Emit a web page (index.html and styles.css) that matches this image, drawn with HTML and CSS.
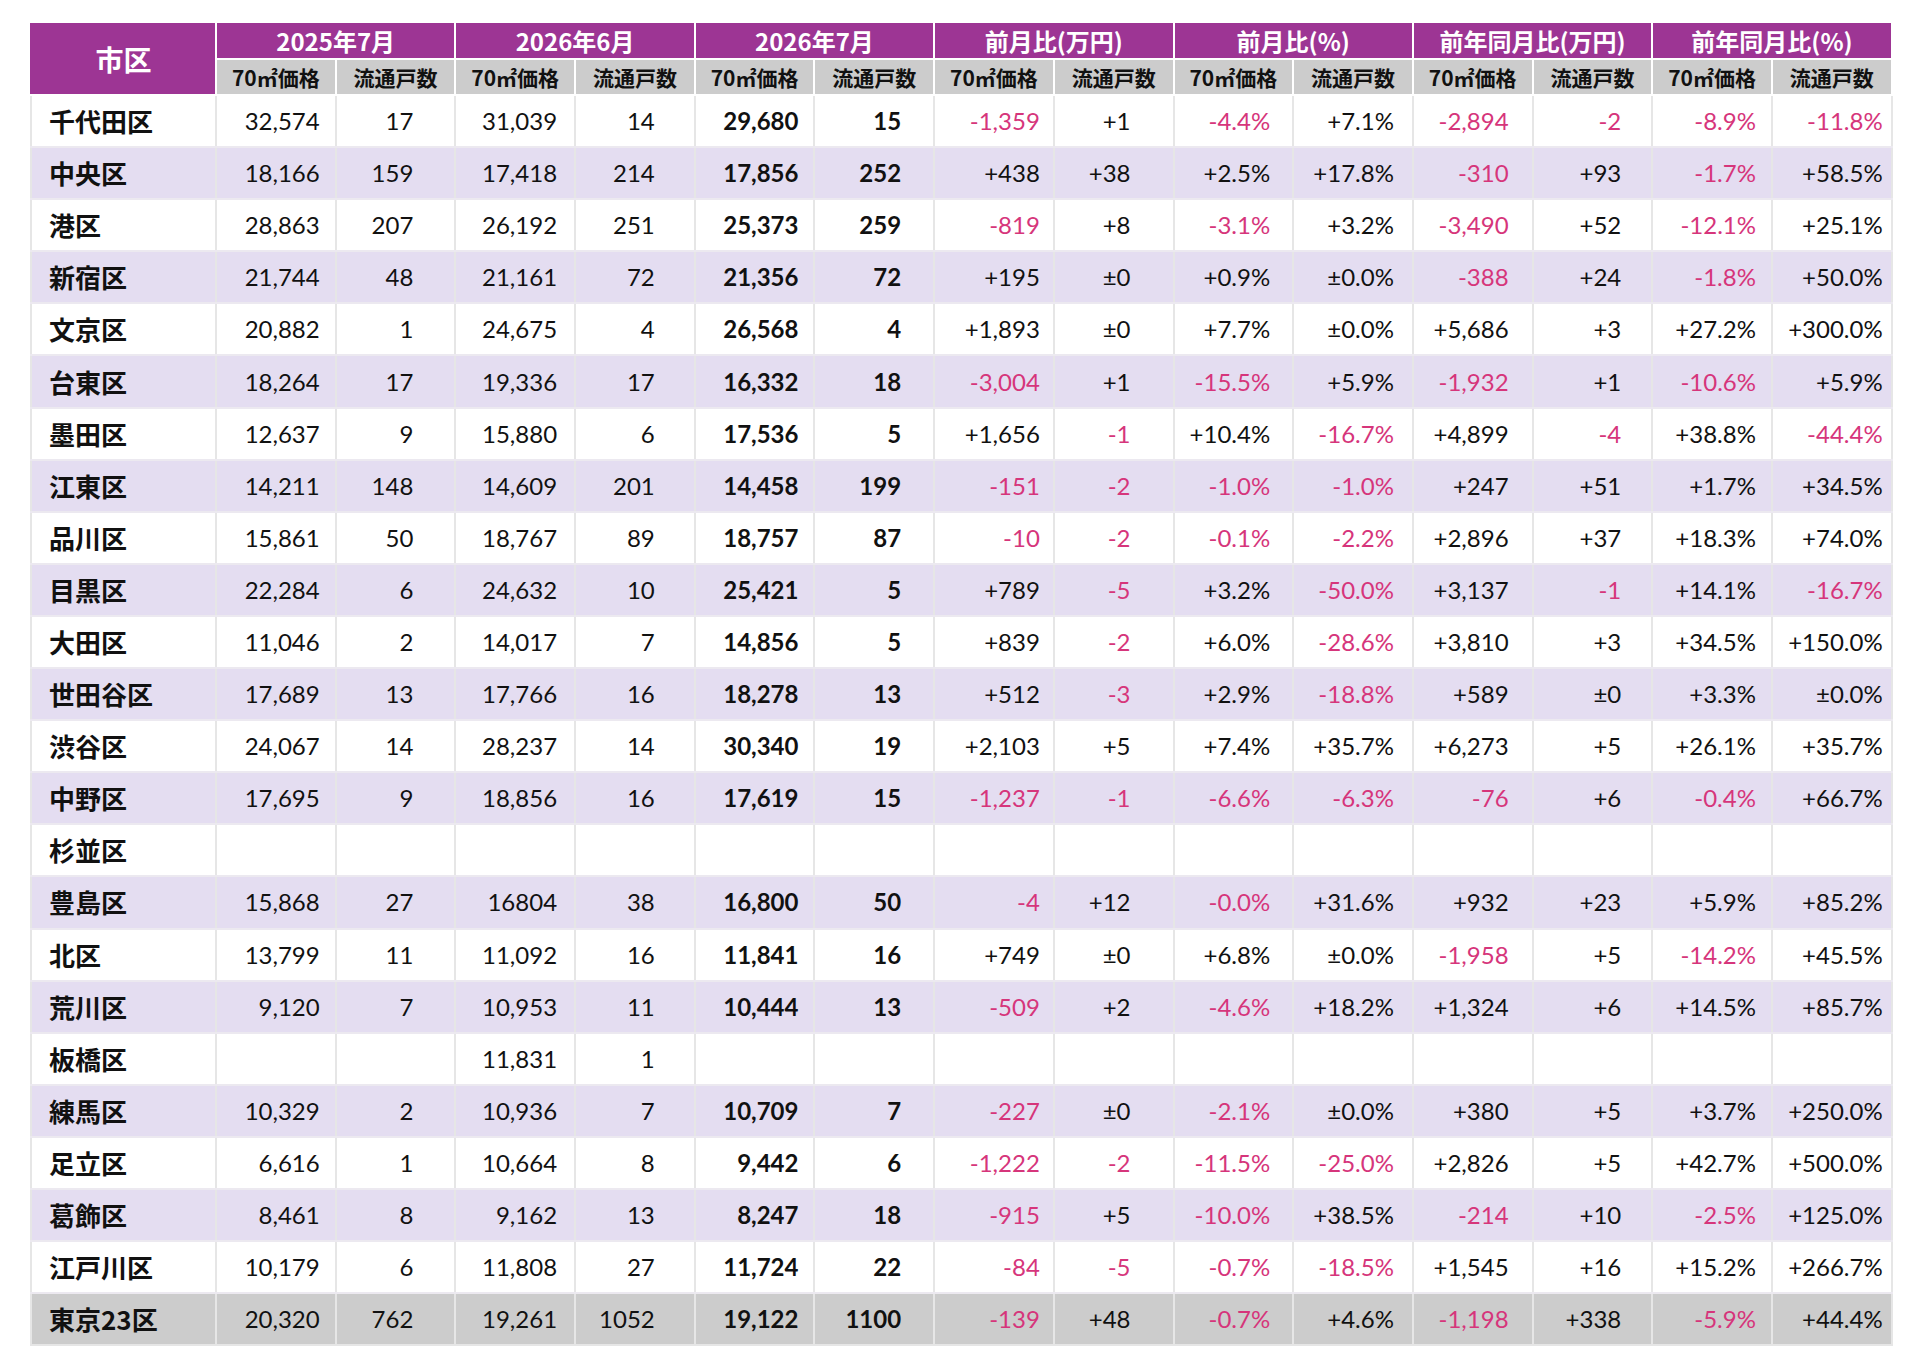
FILE: index.html
```html
<!DOCTYPE html>
<html lang="ja">
<head>
<meta charset="utf-8">
<title>東京23区 70㎡価格・流通戸数</title>
<link rel="stylesheet" href="styles.css">
</head>
<body>
<table class="grid">
<colgroup>
<col class="c-ward">
<col class="c-num"><col class="c-num"><col class="c-num"><col class="c-num"><col class="c-num"><col class="c-num"><col class="c-num">
<col class="c-num"><col class="c-num"><col class="c-num"><col class="c-num"><col class="c-num"><col class="c-num"><col class="c-num">
</colgroup>
<thead>
<tr class="h1">
<th rowspan="2" class="ward-h">市区</th>
<th colspan="2">2025年7月</th>
<th colspan="2">2026年6月</th>
<th colspan="2">2026年7月</th>
<th colspan="2">前月比(万円)</th>
<th colspan="2">前月比(%)</th>
<th colspan="2">前年同月比(万円)</th>
<th colspan="2">前年同月比(%)</th>
</tr>
<tr class="h2">
<th>70㎡価格</th><th>流通戸数</th>
<th>70㎡価格</th><th>流通戸数</th>
<th>70㎡価格</th><th>流通戸数</th>
<th>70㎡価格</th><th>流通戸数</th>
<th>70㎡価格</th><th>流通戸数</th>
<th>70㎡価格</th><th>流通戸数</th>
<th>70㎡価格</th><th>流通戸数</th>
</tr>
</thead>
<tbody>
<tr><td>千代田区</td><td>32,574</td><td>17</td><td>31,039</td><td>14</td><td>29,680</td><td>15</td><td class="neg">-1,359</td><td>+1</td><td class="neg">-4.4%</td><td>+7.1%</td><td class="neg">-2,894</td><td class="neg">-2</td><td class="neg">-8.9%</td><td class="neg">-11.8%</td></tr>
<tr class="alt"><td>中央区</td><td>18,166</td><td>159</td><td>17,418</td><td>214</td><td>17,856</td><td>252</td><td>+438</td><td>+38</td><td>+2.5%</td><td>+17.8%</td><td class="neg">-310</td><td>+93</td><td class="neg">-1.7%</td><td>+58.5%</td></tr>
<tr><td>港区</td><td>28,863</td><td>207</td><td>26,192</td><td>251</td><td>25,373</td><td>259</td><td class="neg">-819</td><td>+8</td><td class="neg">-3.1%</td><td>+3.2%</td><td class="neg">-3,490</td><td>+52</td><td class="neg">-12.1%</td><td>+25.1%</td></tr>
<tr class="alt"><td>新宿区</td><td>21,744</td><td>48</td><td>21,161</td><td>72</td><td>21,356</td><td>72</td><td>+195</td><td>±0</td><td>+0.9%</td><td>±0.0%</td><td class="neg">-388</td><td>+24</td><td class="neg">-1.8%</td><td>+50.0%</td></tr>
<tr><td>文京区</td><td>20,882</td><td>1</td><td>24,675</td><td>4</td><td>26,568</td><td>4</td><td>+1,893</td><td>±0</td><td>+7.7%</td><td>±0.0%</td><td>+5,686</td><td>+3</td><td>+27.2%</td><td>+300.0%</td></tr>
<tr class="alt"><td>台東区</td><td>18,264</td><td>17</td><td>19,336</td><td>17</td><td>16,332</td><td>18</td><td class="neg">-3,004</td><td>+1</td><td class="neg">-15.5%</td><td>+5.9%</td><td class="neg">-1,932</td><td>+1</td><td class="neg">-10.6%</td><td>+5.9%</td></tr>
<tr><td>墨田区</td><td>12,637</td><td>9</td><td>15,880</td><td>6</td><td>17,536</td><td>5</td><td>+1,656</td><td class="neg">-1</td><td>+10.4%</td><td class="neg">-16.7%</td><td>+4,899</td><td class="neg">-4</td><td>+38.8%</td><td class="neg">-44.4%</td></tr>
<tr class="alt"><td>江東区</td><td>14,211</td><td>148</td><td>14,609</td><td>201</td><td>14,458</td><td>199</td><td class="neg">-151</td><td class="neg">-2</td><td class="neg">-1.0%</td><td class="neg">-1.0%</td><td>+247</td><td>+51</td><td>+1.7%</td><td>+34.5%</td></tr>
<tr><td>品川区</td><td>15,861</td><td>50</td><td>18,767</td><td>89</td><td>18,757</td><td>87</td><td class="neg">-10</td><td class="neg">-2</td><td class="neg">-0.1%</td><td class="neg">-2.2%</td><td>+2,896</td><td>+37</td><td>+18.3%</td><td>+74.0%</td></tr>
<tr class="alt"><td>目黒区</td><td>22,284</td><td>6</td><td>24,632</td><td>10</td><td>25,421</td><td>5</td><td>+789</td><td class="neg">-5</td><td>+3.2%</td><td class="neg">-50.0%</td><td>+3,137</td><td class="neg">-1</td><td>+14.1%</td><td class="neg">-16.7%</td></tr>
<tr><td>大田区</td><td>11,046</td><td>2</td><td>14,017</td><td>7</td><td>14,856</td><td>5</td><td>+839</td><td class="neg">-2</td><td>+6.0%</td><td class="neg">-28.6%</td><td>+3,810</td><td>+3</td><td>+34.5%</td><td>+150.0%</td></tr>
<tr class="alt"><td>世田谷区</td><td>17,689</td><td>13</td><td>17,766</td><td>16</td><td>18,278</td><td>13</td><td>+512</td><td class="neg">-3</td><td>+2.9%</td><td class="neg">-18.8%</td><td>+589</td><td>±0</td><td>+3.3%</td><td>±0.0%</td></tr>
<tr><td>渋谷区</td><td>24,067</td><td>14</td><td>28,237</td><td>14</td><td>30,340</td><td>19</td><td>+2,103</td><td>+5</td><td>+7.4%</td><td>+35.7%</td><td>+6,273</td><td>+5</td><td>+26.1%</td><td>+35.7%</td></tr>
<tr class="alt"><td>中野区</td><td>17,695</td><td>9</td><td>18,856</td><td>16</td><td>17,619</td><td>15</td><td class="neg">-1,237</td><td class="neg">-1</td><td class="neg">-6.6%</td><td class="neg">-6.3%</td><td class="neg">-76</td><td>+6</td><td class="neg">-0.4%</td><td>+66.7%</td></tr>
<tr><td>杉並区</td><td></td><td></td><td></td><td></td><td></td><td></td><td></td><td></td><td></td><td></td><td></td><td></td><td></td><td></td></tr>
<tr class="alt"><td>豊島区</td><td>15,868</td><td>27</td><td>16804</td><td>38</td><td>16,800</td><td>50</td><td class="neg">-4</td><td>+12</td><td class="neg">-0.0%</td><td>+31.6%</td><td>+932</td><td>+23</td><td>+5.9%</td><td>+85.2%</td></tr>
<tr><td>北区</td><td>13,799</td><td>11</td><td>11,092</td><td>16</td><td>11,841</td><td>16</td><td>+749</td><td>±0</td><td>+6.8%</td><td>±0.0%</td><td class="neg">-1,958</td><td>+5</td><td class="neg">-14.2%</td><td>+45.5%</td></tr>
<tr class="alt"><td>荒川区</td><td>9,120</td><td>7</td><td>10,953</td><td>11</td><td>10,444</td><td>13</td><td class="neg">-509</td><td>+2</td><td class="neg">-4.6%</td><td>+18.2%</td><td>+1,324</td><td>+6</td><td>+14.5%</td><td>+85.7%</td></tr>
<tr><td>板橋区</td><td></td><td></td><td>11,831</td><td>1</td><td></td><td></td><td></td><td></td><td></td><td></td><td></td><td></td><td></td><td></td></tr>
<tr class="alt"><td>練馬区</td><td>10,329</td><td>2</td><td>10,936</td><td>7</td><td>10,709</td><td>7</td><td class="neg">-227</td><td>±0</td><td class="neg">-2.1%</td><td>±0.0%</td><td>+380</td><td>+5</td><td>+3.7%</td><td>+250.0%</td></tr>
<tr><td>足立区</td><td>6,616</td><td>1</td><td>10,664</td><td>8</td><td>9,442</td><td>6</td><td class="neg">-1,222</td><td class="neg">-2</td><td class="neg">-11.5%</td><td class="neg">-25.0%</td><td>+2,826</td><td>+5</td><td>+42.7%</td><td>+500.0%</td></tr>
<tr class="alt"><td>葛飾区</td><td>8,461</td><td>8</td><td>9,162</td><td>13</td><td>8,247</td><td>18</td><td class="neg">-915</td><td>+5</td><td class="neg">-10.0%</td><td>+38.5%</td><td class="neg">-214</td><td>+10</td><td class="neg">-2.5%</td><td>+125.0%</td></tr>
<tr><td>江戸川区</td><td>10,179</td><td>6</td><td>11,808</td><td>27</td><td>11,724</td><td>22</td><td class="neg">-84</td><td class="neg">-5</td><td class="neg">-0.7%</td><td class="neg">-18.5%</td><td>+1,545</td><td>+16</td><td>+15.2%</td><td>+266.7%</td></tr>
<tr class="total"><td>東京23区</td><td>20,320</td><td>762</td><td>19,261</td><td>1052</td><td>19,122</td><td>1100</td><td class="neg">-139</td><td>+48</td><td class="neg">-0.7%</td><td>+4.6%</td><td class="neg">-1,198</td><td>+338</td><td class="neg">-5.9%</td><td>+44.4%</td></tr>
</tbody>
</table>
</body>
</html>
```
FILE: styles.css
```css
html, body {
  margin: 0;
  padding: 0;
  background: #ffffff;
}

body {
  padding: 21px 0 0 30px;
}

.grid {
  border-collapse: collapse;
  table-layout: fixed;
  width: 1861px;
  font-family: Lato, "Noto Sans CJK JP", sans-serif;
  color: #111111;
}

.c-ward { width: 185px; }
.c-num { width: 119.7px; }

.grid th {
  font-family: "Noto Sans CJK JP", "Noto Sans", sans-serif;
  font-weight: 700;
  text-align: center;
  padding: 0;
  border: 2px solid #ffffff;
  line-height: 1;
}

.h1 th {
  background: #9d3594;
  color: #ffffff;
  font-size: 24px;
  height: 35px;
  font-weight: 600;
}

.h1 th.ward-h {
  font-size: 28px;
  border-left: 2px solid #9d3594;
}

.h2 th {
  background: #cccccc;
  color: #111111;
  font-size: 21px;
  height: 34px;
}

.grid td {
  height: 50.1px;
  padding: 0;
  font-size: 24px;
  text-align: right;
  border: 2px solid #e6e6e6;
  border-top-color: #ece9f0;
  border-bottom-color: #ece9f0;
  white-space: nowrap;
  line-height: 1;
}

.grid tr.alt td { background: #e4ddf1; }
.grid tr.total td { background: #cccccc; border-bottom-color: #e6e6e6; }

.grid td:nth-child(1) {
  text-align: left;
  padding-left: 17px;
  font-family: "Noto Sans CJK JP", sans-serif;
  font-weight: 700;
  font-size: 26px;
  color: #111111;
}

.grid td:nth-child(2) { padding-right: 15px; }
.grid td:nth-child(3) { padding-right: 41px; }
.grid td:nth-child(4) { padding-right: 17px; }
.grid td:nth-child(5) { padding-right: 39px; }
.grid td:nth-child(6) { padding-right: 15px; font-weight: 700; }
.grid td:nth-child(7) { padding-right: 32px; font-weight: 700; }
.grid td:nth-child(8) { padding-right: 13px; }
.grid td:nth-child(9) { padding-right: 42px; }
.grid td:nth-child(10) { padding-right: 22px; }
.grid td:nth-child(11) { padding-right: 18px; }
.grid td:nth-child(12) { padding-right: 23px; }
.grid td:nth-child(13) { padding-right: 30px; }
.grid td:nth-child(14) { padding-right: 15px; }
.grid td:nth-child(15) { padding-right: 8px; }

.grid td.neg { color: #d6357b; }
```
